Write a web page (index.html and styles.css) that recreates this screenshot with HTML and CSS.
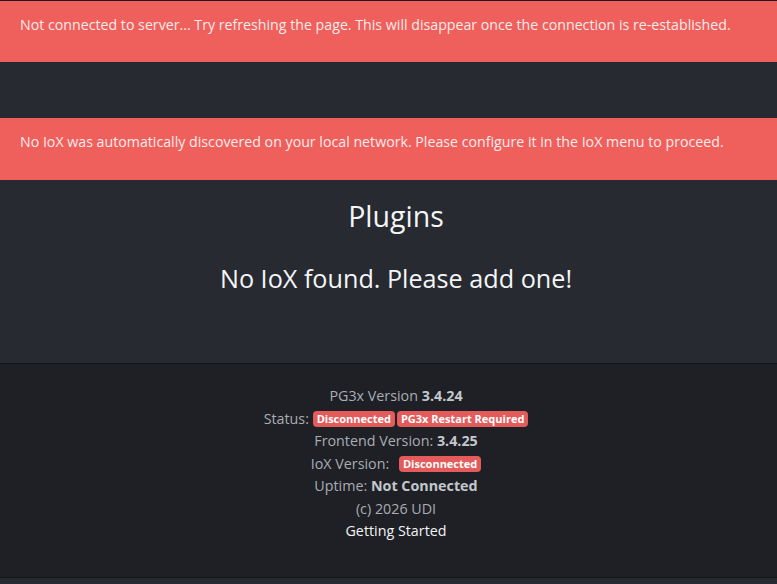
FILE: index.html
```html
<!DOCTYPE html>
<html lang="en">
<head>
<meta charset="utf-8">
<title>PG3x</title>
<link rel="stylesheet" href="styles.css">
</head>
<body>
<div class="topline"></div>
<div class="alert">Not connected to server... Try refreshing the page. This will disappear once the connection is re-established.</div>
<div class="spacer"></div>
<div class="alert">No IoX was automatically discovered on your local network. Please configure it in the IoX menu to proceed.</div>
<main class="content">
  <h1 class="title">Plugins</h1>
  <h2 class="subtitle">No IoX found. Please add one!</h2>
</main>
<footer class="footer">
  <div class="line">PG3x Version <b>3.4.24</b></div>
  <div class="line">Status: <span class="badge">Disconnected</span><span class="badge">PG3x Restart Required</span></div>
  <div class="line">Frontend Version: <b>3.4.25</b></div>
  <div class="line">IoX Version: <span class="badge gap">Disconnected</span></div>
  <div class="line">Uptime: <b>Not Connected</b></div>
  <div class="line">(c) 2026 UDI</div>
  <div class="line link">Getting Started</div>
</footer>
<div class="bottom"></div>
</body>
</html>
```
FILE: styles.css
```css
html, body {
  margin: 0;
  padding: 0;
  background: #272a30;
  font-family: "Open Sans", "Noto Sans", sans-serif;
}
.topline {
  height: 1px;
  background: #1b1c20;
}
.alert {
  background: #ef5f5b;
  color: #fbeceb;
  font-size: 14.2px;
  height: 61px;
  box-sizing: border-box;
  padding: 14px 20px 0;
  line-height: 20px;
  white-space: nowrap;
  overflow: hidden;
}
.alert + .spacer + .alert { height: 62px; }
.spacer {
  height: 56px;
}
.content {
  height: 183px;
  box-sizing: border-box;
  padding: 18px 0 0 15px;
  text-align: center;
  color: #f4f5f7;
}
.title {
  margin: 0;
  font-weight: 400;
  font-size: 28.5px;
  line-height: 36px;
}
.subtitle {
  margin: 27px 0 0;
  font-weight: 400;
  font-size: 25.2px;
  line-height: 34px;
}
.footer {
  background: #1e2025;
  border-top: 1px solid #121316;
  border-bottom: 1px solid #121316;
  height: 213px;
  padding-left: 15px;
  text-align: center;
  color: #a9adb4;
  font-size: 14.3px;
}
.footer .line {
  line-height: 22.5px;
}
.footer .line:first-child { margin-top: 21px; }
.footer b {
  color: #c4c7cc;
  font-weight: 700;
}
.badge {
  display: inline-block;
  background: #e35b5b;
  color: #ffffff;
  font-size: 11px;
  font-weight: 700;
  line-height: 16px;
  padding: 0 4px;
  border-radius: 4px;
  vertical-align: 1px;
}
.badge + .badge { margin-left: 2px; }
.badge.gap { margin-left: 6px; }
.link { color: #f2f3f5; }
.bottom { height: 6px; }
```
